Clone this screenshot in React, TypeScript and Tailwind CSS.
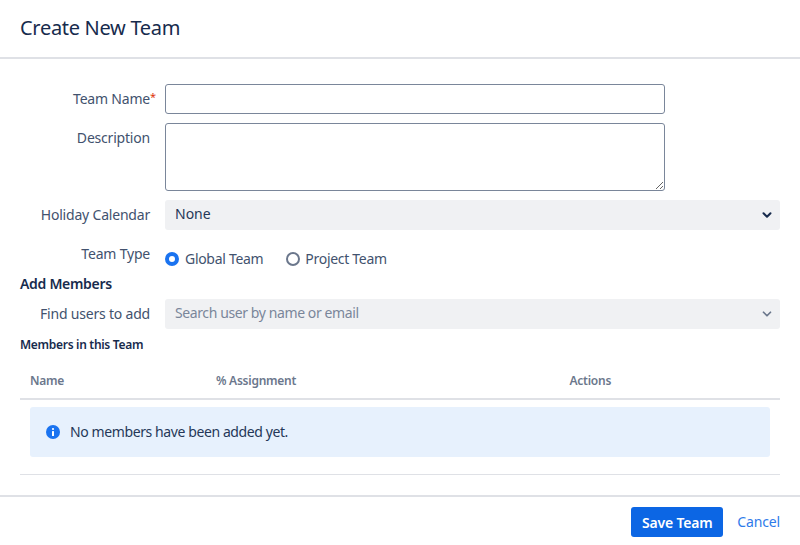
import { ChevronDown } from "lucide-react";

const font = "font-['Noto_Sans',sans-serif]";

function Label({ text, required }: { text: string; required?: boolean }) {
  return (
    <div className="w-[130px] shrink-0 text-right text-[14px] leading-5 tracking-[-0.2px] text-[#42526e]">
      {text}
      {required && <span className="absolute text-[11px] leading-4 text-[#de350b]">*</span>}
    </div>
  );
}

export default function App() {
  return (
    <div className={`${font} flex h-[545px] w-[800px] flex-col bg-white text-[#172b4d]`}>
      <header className="h-[59px] shrink-0 border-b-2 border-[#dfe1e6] pl-5 pt-[14px]">
        <h1 className="text-[20px] leading-7 tracking-[-0.3px] text-[#172b4d]">Create New Team</h1>
      </header>

      <div className="flex-1 px-5 pt-[25px]">
        <div className="flex items-center gap-[15px]">
          <Label text="Team Name" required />
          <input className="h-[30px] w-[500px] rounded-[3px] border border-[#7a869a] outline-none" />
        </div>

        <div className="mt-[9px] flex gap-[15px]">
          <div className="pt-[5px]">
            <Label text="Description" />
          </div>
          <textarea className="block h-[68px] w-[500px] resize rounded-[3px] border border-[#7a869a] outline-none" />
        </div>

        <div className="mt-[9px] flex items-center gap-[15px]">
          <Label text="Holiday Calendar" />
          <div className="flex h-[30px] flex-1 items-center justify-between rounded-[3px] bg-[#f0f1f3] pl-[10px] pr-[6px] text-[14px] text-[#253858]">
            <span className="mb-[3px]">None</span>
            <ChevronDown size={14} strokeWidth={3.5} className="text-[#172b4d]" />
          </div>
        </div>

        <div className="mt-[9px] flex h-[30px] gap-[15px]">
          <div className="pt-[5px]">
            <Label text="Team Type" />
          </div>
          <div className="flex items-center gap-[23px] pt-[8px] text-[14px] tracking-[-0.3px] text-[#42526e]">
            <span className="flex items-center gap-[6px]">
              <span className="mt-px h-[14px] w-[14px] rounded-full border-[4px] border-[#1a73f0] bg-white" />
              Global Team
            </span>
            <span className="flex items-center gap-[5px]">
              <span className="mt-px h-[14px] w-[14px] rounded-full border-2 border-[#6b778c] bg-white" />
              Project Team
            </span>
          </div>
        </div>

        <h2 className="mt-[5px] text-[14px] font-semibold leading-5 tracking-[-0.3px] text-[#172b4d]">Add Members</h2>

        <div className="mt-[5px] flex items-center gap-[15px]">
          <Label text="Find users to add" />
          <div className="flex h-[30px] flex-1 items-center justify-between rounded-[3px] bg-[#f0f1f3] pl-[10px] pr-[6px] text-[14px] tracking-[-0.4px] text-[#7a869a]">
            <span className="mb-[3px]">Search user by name or email</span>
            <ChevronDown size={14} strokeWidth={3} className="text-[#6b778c]" />
          </div>
        </div>

        <h3 className="mt-[8px] text-[12px] font-semibold leading-4 tracking-[-0.3px] text-[#172b4d]">Members in this Team</h3>

        <div className="mt-[9px] flex h-[38px] items-center border-b-2 border-[#dfe1e6] pb-2 pl-[10px] pt-[10px] text-[12px] font-semibold tracking-[-0.25px] text-[#6b778c]">
          <span className="w-[186px]">Name</span>
          <span className="w-[353.5px]">% Assignment</span>
          <span>Actions</span>
        </div>

        <div className="border-b border-[#dfe1e6] px-[10px] pb-[17px] pt-[7px]">
          <div className="flex h-[50px] items-center gap-[10px] rounded-[3px] bg-[#e7f1fd] pb-[1px] pl-4 text-[14px] tracking-[-0.4px] text-[#253858]">
            <svg width="14" height="14" viewBox="0 0 14 14" className="shrink-0">
              <circle cx="7" cy="7" r="7" fill="#1a73f0" />
              <rect x="6" y="6" width="2" height="5" rx="0.5" fill="#fff" />
              <circle cx="7" cy="4" r="1.1" fill="#fff" />
            </svg>
            No members have been added yet.
          </div>
        </div>
      </div>

      <footer className="flex h-[50px] shrink-0 items-start justify-end border-t-2 border-[#dfe1e6] pr-5 pt-[10px]">
        <button className="h-[30px] w-[92px] rounded-[3px] bg-[#0c66e4] text-[14px] font-semibold tracking-[-0.2px] text-white">Save Team</button>
        <a className="ml-[14px] text-[14px] leading-[30px] tracking-[-0.15px] text-[#2f7bea]">Cancel</a>
      </footer>
    </div>
  );
}
